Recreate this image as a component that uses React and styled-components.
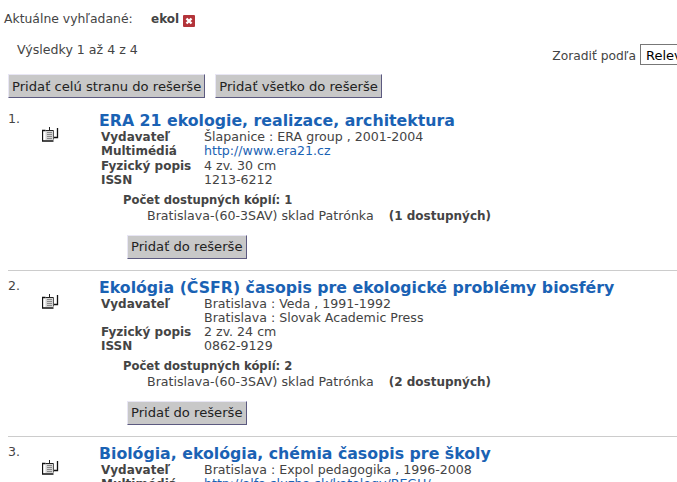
import React from 'react'
import styled, { createGlobalStyle } from 'styled-components'

const GlobalStyle = createGlobalStyle`
  html, body {
    margin: 0;
    padding: 0;
    background: #fff;
    overflow: hidden;
  }
  body {
    font-family: 'DejaVu Sans', Verdana, sans-serif;
    font-size: 12.6px;
    color: #444;
  }
  b {
    font-size: 12px;
  }
`

const Page = styled.div`
  width: 677px;
  height: 482px;
  overflow: hidden;
`

const SearchBar = styled.div`
  display: flex;
  align-items: center;
  height: 19px;
  padding: 9px 0 0 4px;
  font-size: 12.4px;
`

const SearchLabel = styled.span`
  width: 147px;
`

const SearchTerm = styled.b`
  color: #444;
`

const RemoveIcon = styled.svg`
  width: 12px;
  height: 12px;
  margin: 4px 0 0 4px;
`

const SortRow = styled.div`
  display: flex;
  justify-content: space-between;
  height: 38px;
`

const ResultCount = styled.span`
  padding: 14px 0 0 17px;
`

const SortBox = styled.div`
  display: flex;
  align-items: flex-start;
  gap: 4px;
  padding-top: 16px;
  font-size: 12.3px;
`

const SortLabel = styled.span`
  padding-top: 5px;
`

const SortSelect = styled.div`
  width: 60px;
  height: 21px;
  margin-right: -23px;
  border: 1px solid #777;
  box-sizing: border-box;
  padding: 3px 0 0 5px;
  color: #000;
  font-size: 13px;
  overflow: hidden;
  white-space: nowrap;
`

const Toolbar = styled.div`
  display: flex;
  gap: 10px;
  padding: 8px 0 0 8px;
`

const Button = styled.button`
  height: 24px;
  padding: 0 3px;
  background: #c8c8c8;
  border: 1px solid;
  border-color: #e8e6f4 #5c5a80 #5c5a80 #e8e6f4;
  color: #222;
  font: inherit;
  font-size: 13.15px;
  white-space: nowrap;
`

const Result = styled.div`
  display: grid;
  grid-template-columns: 34px 57px 1fr;
  box-sizing: border-box;
  margin-left: 8px;
  padding-top: ${props => props.$first ? '13px' : '7px'};
  height: ${props => props.$height};
  border-bottom: ${props => props.$last ? 'none' : '1px solid #ccc'};
`

const Index = styled.div``

const BookIcon = styled.svg`
  display: block;
  width: 18px;
  height: 15px;
  margin-top: 16px;
`

const Title = styled.a`
  display: block;
  color: #1a62b4;
  font-size: 15.75px;
  font-weight: bold;
  line-height: 19px;
  white-space: nowrap;
`

const Meta = styled.div`
  display: grid;
  grid-template-columns: 103px 1fr;
  padding-left: 2px;
  line-height: 14.4px;
`

const MetaLabel = styled.b``

const MetaValue = styled.div`
  line-height: ${props => props.$multi ? '13.9px' : 'inherit'};
`

const MetaLink = styled.a`
  color: #1a62b4;
`

const Availability = styled.div`
  margin: 4px 0 0 24px;
  line-height: 16px;
`

const CopiesHeading = styled.b`
  font-size: 11.6px;
`

const AvailabilityRow = styled.div`
  display: flex;
  padding-left: 24px;
`

const AvailabilityCount = styled.b`
  margin-left: 15px;
`

const RowAction = styled.div`
  padding: 11px 0 0 28px;
`

const results = [
  {
    title: 'ERA 21 ekologie, realizace, architektura',
    height: '173px',
    first: true,
    meta: [
      ['Vydavateľ', ['Šlapanice : ERA group , 2001-2004']],
      ['Multimédiá', ['http://www.era21.cz'], true],
      ['Fyzický popis', ['4 zv. 30 cm']],
      ['ISSN', ['1213-6212']]
    ],
    copies: 1
  },
  {
    title: 'Ekológia (ČSFR) časopis pre ekologické problémy biosféry',
    height: '166px',
    meta: [
      ['Vydavateľ', ['Bratislava : Veda , 1991-1992', 'Bratislava : Slovak Academic Press']],
      ['Fyzický popis', ['2 zv. 24 cm']],
      ['ISSN', ['0862-9129']]
    ],
    copies: 2
  },
  {
    title: 'Biológia, ekológia, chémia časopis pre školy',
    height: '60px',
    last: true,
    meta: [
      ['Vydavateľ', ['Bratislava : Expol pedagogika , 1996-2008']],
      ['Multimédiá', ['http://alfa.sluzba.sk/katalogy/BEGH/'], true]
    ]
  }
]

const Remove = () => (
  <RemoveIcon viewBox='0 0 12 12'>
    <rect width='12' height='12' rx='1' fill='#b3343a' />
    <path d='M3.5 3.5l5 5M8.5 3.5l-5 5' stroke='#fff' strokeWidth='2.4' />
  </RemoveIcon>
)

const Book = () => (
  <BookIcon viewBox='0 0 18 15' fill='none'>
    <rect x='3.5' y='3.5' width='8' height='9.5' fill='#d4d4d4' />
    <path d='M5 5.5h5M5 7.5h5M5 9.5h5M5 11.5h5' stroke='#8a8a8a' />
    <path d='M3.5 3.5H.5v10.5H11.5' stroke='#111' strokeWidth='1.3' />
    <path d='M7.5 0v3.5M3.5 3.5h8' stroke='#222' />
    <path d='M11.5 3.5v9' stroke='#555' />
    <path d='M15.5 1v9.5H12' stroke='#111' strokeWidth='1.3' />
  </BookIcon>
)

const App = () => (
  <Page>
    <GlobalStyle />
    <SearchBar>
      <SearchLabel>Aktuálne vyhľadané:</SearchLabel>
      <SearchTerm>ekol</SearchTerm>
      <Remove />
    </SearchBar>
    <SortRow>
      <ResultCount>Výsledky 1 až 4 z 4</ResultCount>
      <SortBox>
        <SortLabel>Zoradiť podľa</SortLabel>
        <SortSelect>Relevancia</SortSelect>
      </SortBox>
    </SortRow>
    <Toolbar>
      <Button>Pridať celú stranu do rešerše</Button>
      <Button>Pridať všetko do rešerše</Button>
    </Toolbar>
    {results.map((result, i) => (
      <Result key={result.title} $first={result.first} $last={result.last} $height={result.height}>
        <Index>{i + 1}.</Index>
        <div><Book /></div>
        <div>
          <Title>{result.title}</Title>
          <Meta>
            {result.meta.map(([label, values, isLink]) => (
              <React.Fragment key={label}>
                <MetaLabel>{label}</MetaLabel>
                <MetaValue $multi={values.length > 1}>
                  {values.map(value => (
                    <div key={value}>{isLink ? <MetaLink>{value}</MetaLink> : value}</div>
                  ))}
                </MetaValue>
              </React.Fragment>
            ))}
          </Meta>
          {result.copies && (
            <>
              <Availability>
                <CopiesHeading>Počet dostupných kópií: {result.copies}</CopiesHeading>
                <AvailabilityRow>
                  Bratislava-(60-3SAV) sklad Patrónka
                  <AvailabilityCount>({result.copies} dostupných)</AvailabilityCount>
                </AvailabilityRow>
              </Availability>
              <RowAction>
                <Button>Pridať do rešerše</Button>
              </RowAction>
            </>
          )}
        </div>
      </Result>
    ))}
  </Page>
)

export default App
